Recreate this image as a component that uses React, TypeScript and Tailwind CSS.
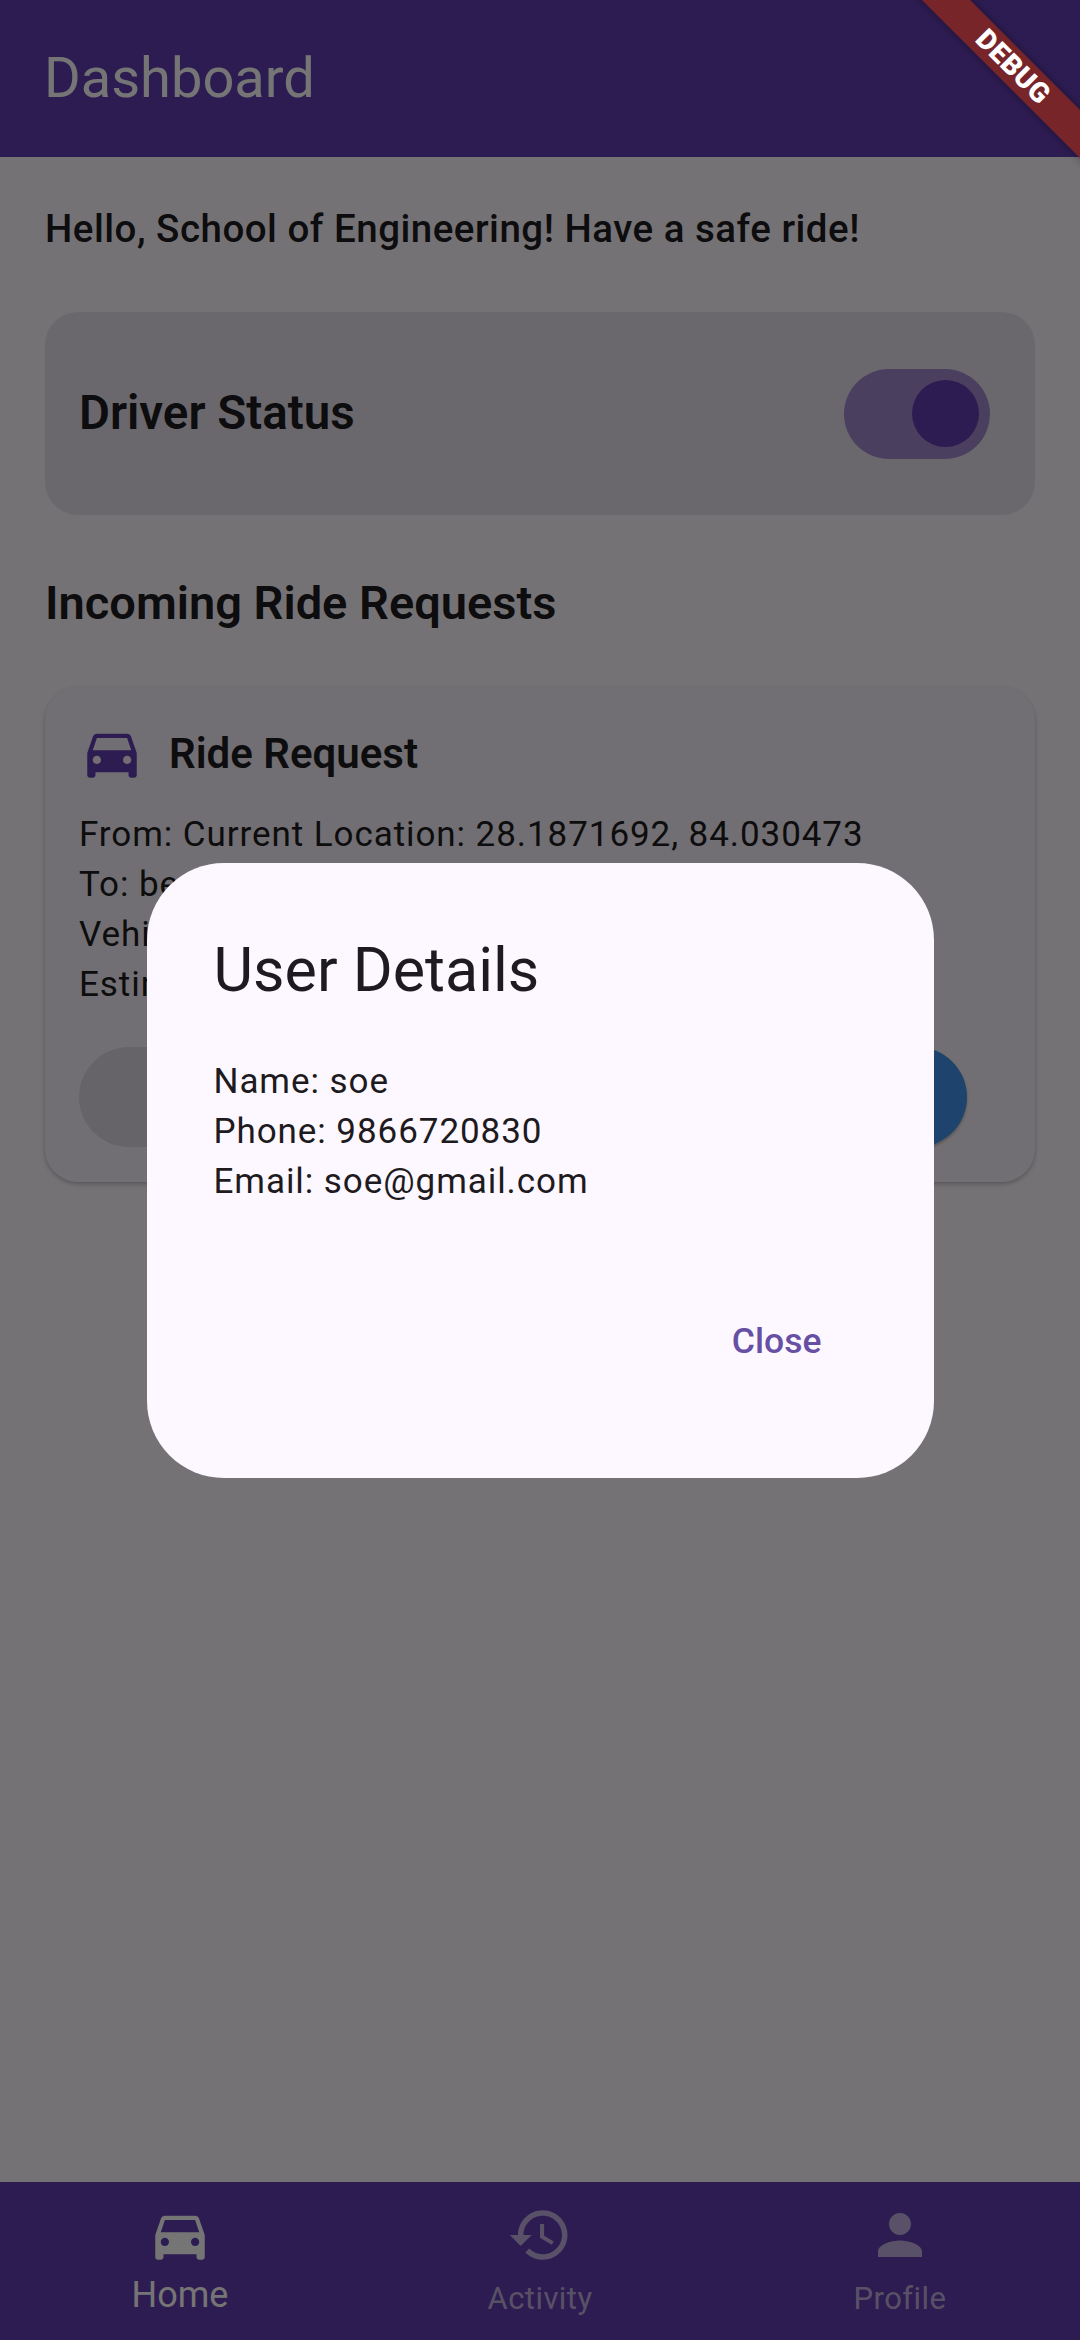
import React from "react";

const CAR = "M18.92 6.01C18.72 5.42 18.16 5 17.5 5h-11c-.66 0-1.21.42-1.42 1.01L3 12v8c0 .55.45 1 1 1h1c.55 0 1-.45 1-1v-1h12v1c0 .55.45 1 1 1h1c.55 0 1-.45 1-1v-8l-2.08-5.99zM6.5 16c-.83 0-1.5-.67-1.5-1.5S5.67 13 6.5 13s1.5.67 1.5 1.5S7.33 16 6.5 16zm11 0c-.83 0-1.5-.67-1.5-1.5s.67-1.5 1.5-1.5 1.5.67 1.5 1.5-.67 1.5-1.5 1.5zM5 11l1.5-4.5h11L19 11H5z";
const HISTORY = "M13 3c-4.97 0-9 4.03-9 9H1l3.89 3.89.07.14L9 12H6c0-3.87 3.13-7 7-7s7 3.13 7 7-3.13 7-7 7c-1.93 0-3.68-.79-4.94-2.06l-1.42 1.42C8.27 19.99 10.51 21 13 21c4.97 0 9-4.03 9-9s-4.03-9-9-9zm-1 5v5l4.28 2.54.72-1.21-3.5-2.08V8H12z";
const PERSON = "M12 12c2.21 0 4-1.79 4-4s-1.79-4-4-4-4 1.79-4 4 1.79 4 4 4zm0 2c-2.67 0-8 1.34-8 4v2h16v-2c0-2.66-5.33-4-8-4z";

function Icon({ d, className }: { d: string; className: string }) {
  return (
    <svg viewBox="0 0 24 24" fill="currentColor" className={className}>
      <path d={d} />
    </svg>
  );
}

export default function App() {
  return (
    <div className="relative flex h-[2340px] w-[1080px] flex-col overflow-hidden bg-[#fdf8ff] font-['Roboto',sans-serif] text-[#1d1b20]">
      <header className="flex h-[157px] shrink-0 items-center bg-[#623db2] pl-[44px] text-[56px] leading-none text-white">
        <span className="relative top-[-1px]">Dashboard</span>
      </header>

      <main className="flex flex-1 flex-col px-[45px]">
        <p className="mt-[44px] text-[38.5px] leading-[55px] font-medium tracking-[0.5px]">
          Hello, School of Engineering! Have a safe ride!
        </p>

        <section className="mt-[56px] flex h-[203px] items-center justify-between rounded-[33px] bg-[#e8e2ee] pr-[45px] pl-[34px]">
          <h2 className="text-[47.5px] font-semibold">Driver Status</h2>
          <div className="flex h-[90px] w-[146px] items-center justify-end rounded-full bg-[#a18ace] pr-[11px]">
            <div className="h-[67px] w-[67px] rounded-full bg-[#623db2]" />
          </div>
        </section>

        <h2 className="mt-[58px] text-[47px] leading-[60px] font-semibold">Incoming Ride Requests</h2>

        <section className="mt-[54px] flex h-[495px] flex-col rounded-[33px] bg-[#f7f2fa] px-[34px] pt-[33px] shadow-[0_2px_4px_rgba(0,0,0,0.25)]">
          <div className="flex h-[66px] items-center gap-[24px]">
            <Icon d={CAR} className="h-[66px] w-[66px] text-[#623db2]" />
            <h3 className="text-[42px] font-semibold">Ride Request</h3>
          </div>
          <div className="mt-[24px] text-[35px] leading-[50px] tracking-[0.93px]">
            <p>From: Current Location: 28.1871692, 84.030473</p>
            <p>To: bed</p>
            <p>Vehicle</p>
            <p>Estimated</p>
          </div>
          <div className="mt-[37px] flex justify-between pr-[34px]">
            <div className="h-[100px] w-[300px] rounded-full bg-[#dedae5]" />
            <div className="h-[100px] w-[300px] rounded-full bg-[#4392eb] shadow-[0_2px_3px_rgba(0,0,0,0.25)]" />
          </div>
        </section>
      </main>

      <nav className="grid h-[158px] shrink-0 grid-cols-3 bg-[#623db2]">
        <div className="flex flex-col items-center pt-[20px] text-white">
          <Icon d={CAR} className="h-[66px] w-[66px]" />
          <span className="mt-[4px] text-[36px] leading-[46px]">Home</span>
        </div>
        <div className="flex flex-col items-center pt-[20px] text-white/60">
          <Icon d={HISTORY} className="h-[66px] w-[66px]" />
          <span className="mt-[9px] text-[31px] leading-[44px] tracking-[0.45px]">Activity</span>
        </div>
        <div className="flex flex-col items-center pt-[20px] text-white/60">
          <Icon d={PERSON} className="h-[66px] w-[66px]" />
          <span className="mt-[9px] text-[31px] leading-[44px] tracking-[0.45px]">Profile</span>
        </div>
      </nav>

      <div className="absolute inset-0 flex items-center justify-center bg-black/54">
        <div className="flex h-[615px] w-[787px] flex-col rounded-[77px] bg-[#fdf8ff] px-[67px] pt-[67px]">
          <h2 className="text-[61px] leading-[80px]">User Details</h2>
          <div className="mt-[47px] text-[35px] leading-[50px] tracking-[0.93px]">
            <p>Name: soe</p>
            <p>Phone: 9866720830</p>
            <p>Email: soe@gmail.com</p>
          </div>
          <div className="mt-[109px] flex justify-end pr-[45px]">
            <span className="text-[35.5px] leading-[50px] font-medium text-[#6750a4]">Close</span>
          </div>
        </div>
      </div>

      <div className="absolute top-[50px] left-[863px] flex h-[34px] w-[300px] rotate-45 items-center justify-center bg-[#78252a] text-[28px] leading-none font-black tracking-[0.5px] text-white shadow-[0_0_10px_rgba(0,0,0,0.35)]">
        DEBUG
      </div>
    </div>
  );
}
